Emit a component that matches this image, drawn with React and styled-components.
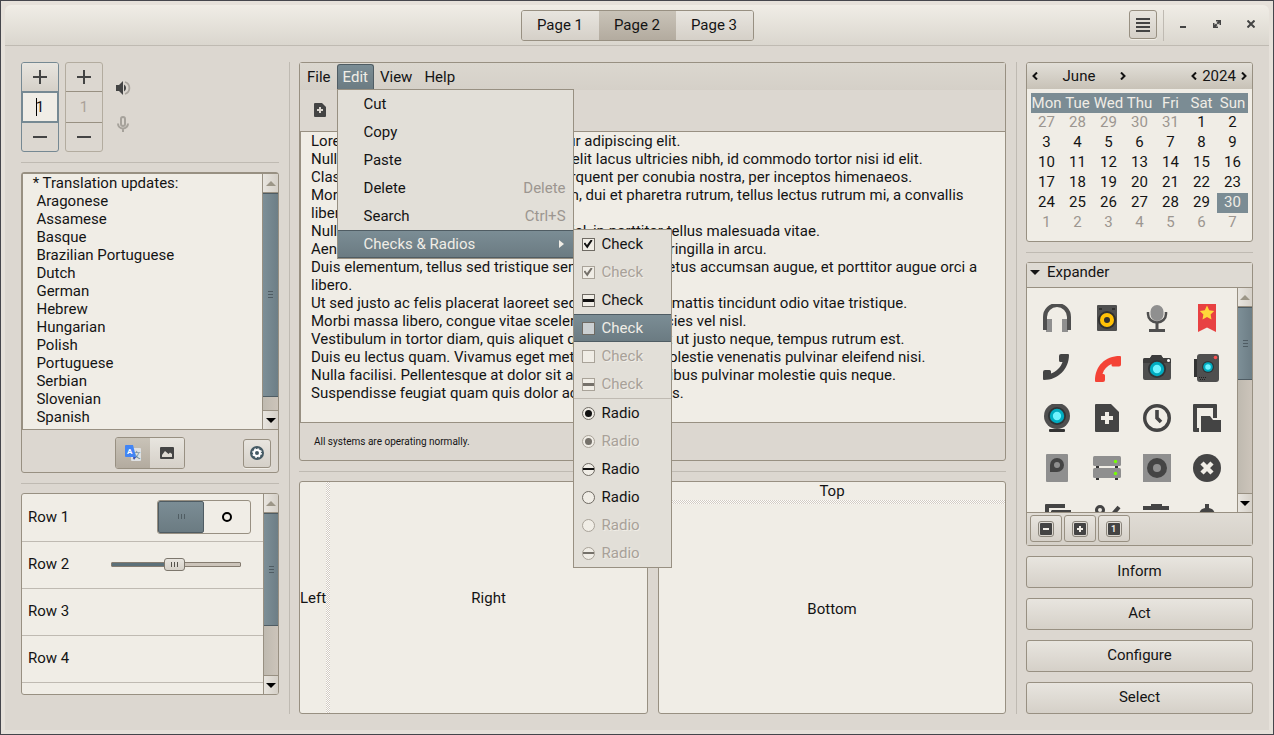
import React from "react";
import styled, { createGlobalStyle, css } from "styled-components";

const c = {
  bg: "#dcd7d0",
  base: "#f0ede6",
  frame: "#e6e1da",
  outline: "#45464c",
  border: "#989082",
  soft: "#bfbab2",
  dim: "#9c9690",
  text: "#141414",
  icon: "#444444",
  menu: "#e2dfd8",
  sel: "linear-gradient(#7b8d95, #6b7b82)",
  flat: "#7b8c94",
  selEdge: "#4f5c63",
  button: "linear-gradient(#e8e5df, #d5d0c8)",
};

const GlobalStyle = createGlobalStyle`
  *, *::before, *::after { box-sizing: border-box; }
  body {
    margin: 0;
    background: ${c.frame};
    color: ${c.text};
    font: 15px/18px Roboto, "Liberation Sans", sans-serif;
  }
  button, input, textarea { font: inherit; color: inherit; margin: 0; }
`;

/* ---------- window ---------- */

const Window = styled.div`
  display: flex;
  flex-direction: column;
  min-height: 100vh;
  padding: 4px;
  border: 1px solid ${c.outline};
  background: ${c.frame};
`;

const Header = styled.header`
  display: grid;
  grid-template-columns: 1fr auto 1fr;
  align-items: start;
  height: 41px;
  padding-top: 5px;
  border-bottom: 1px solid ${c.soft};
  border-radius: 6px 6px 0 0;
  background: linear-gradient(${c.base}, #dad6ce);
`;

const Linked = styled.div`
  display: flex;
  border: 1px solid ${c.border};
  border-radius: 3px;
  overflow: hidden;
`;

const Segment = styled.button`
  display: flex;
  align-items: center;
  justify-content: center;
  width: ${(p) => p.$width};
  height: ${(p) => p.$height};
  padding: 0 0 1px;
  border: 0;
  background: ${(p) => (p.$active ? "linear-gradient(#c9c3b8, #b3ab9f)" : c.button)};
`;

const HeaderEnd = styled.div`
  display: flex;
  justify-content: flex-end;
  align-items: flex-start;
  padding-right: 8px;
`;

const IconButton = styled.button`
  display: flex;
  align-items: center;
  justify-content: center;
  width: 28px;
  height: 29px;
  padding: 0;
  border: 1px solid ${c.border};
  border-radius: 3px;
  background: ${c.button};
  box-shadow: 0 1px 0 ${c.base};
`;

const HeaderRule = styled.div`
  width: 1px;
  height: 31px;
  margin: 0 9px 0 6px;
  background: ${c.soft};
`;

const WindowButton = styled.button`
  display: flex;
  align-items: center;
  justify-content: center;
  width: 20px;
  height: 28px;
  padding: 0;
  border: 0;
  background: none;
  & + & { margin-left: 14px; }
`;

const Body = styled.main`
  display: grid;
  flex: 1;
  grid-template-columns: 269px 1fr 227px;
  column-gap: 9px;
  padding: 16px;
  background: ${c.bg};
`;

const Column = styled.div`
  display: flex;
  flex-direction: column;
  min-width: 0;
  ${(p) => p.$ruled && css`
    padding-right: 10px;
    border-right: 1px solid ${c.soft};
  `}
`;

const Rule = styled.hr`
  flex: none;
  width: 100%;
  height: 1px;
  margin: 10px 0 9px;
  border: 0;
  background: ${c.soft};
`;

const Frame = styled.section`
  display: flex;
  flex-direction: column;
  border: 1px solid ${c.border};
  border-radius: 3px;
`;

/* ---------- scrollbar ---------- */

const Bar = styled.div`
  display: flex;
  flex: none;
  flex-direction: column;
  width: ${(p) => (p.$wide ? "16px" : "15px")};
  border-left: 1px solid ${c.border};
  background: linear-gradient(90deg, #bfbab0, #ccc4ba);
`;

const Stepper = styled.button`
  display: flex;
  align-items: center;
  justify-content: center;
  height: 19px;
  padding: 0;
  border: 0;
  border-bottom: 1px solid ${c.border};
  background: linear-gradient(90deg, #e8e5df, #d5d0c8);
  color: ${(p) => (p.$dim ? "#9c9687" : "#000")};
  &:last-child { border-top: 1px solid ${c.border}; border-bottom: 0; }
`;

const Trough = styled.div`
  display: flex;
  flex: 1;
  flex-direction: column;
`;

const Thumb = styled.div`
  display: flex;
  align-items: center;
  justify-content: center;
  height: ${(p) => p.$size};
  border: solid ${c.selEdge};
  border-width: 1px 0;
  background: linear-gradient(90deg, #7d8f97, #6d7e86);
`;

const Arrow = ({ up }) => (
  <svg width="10" height="5" viewBox="0 0 10 5">
    <path fill="currentColor" d={up ? "M0 5L5 0L10 5Z" : "M0 0H10L5 5Z"} />
  </svg>
);

const Grip = styled.span`
  width: 5px;
  height: 7px;
  background: repeating-linear-gradient(${c.selEdge} 0 1px, transparent 1px 3px);
`;

const Scrollbar = ({ size, wide }) => (
  <Bar $wide={wide}>
    <Stepper $dim aria-label="Scroll up"><Arrow up /></Stepper>
    <Trough><Thumb $size={size}><Grip /></Thumb></Trough>
    <Stepper aria-label="Scroll down"><Arrow /></Stepper>
  </Bar>
);

/* ---------- left column ---------- */

const SpinRow = styled.div`
  display: flex;
  gap: 6px;
`;

const Spin = styled.div`
  display: flex;
  flex-direction: column;
  width: 38px;
  border: 1px solid ${(p) => (p.$focus ? "#768993" : "#b3ac9f")};
  border-radius: 3px;
  overflow: hidden;
`;

const SpinButton = styled.button`
  display: flex;
  align-items: center;
  justify-content: center;
  height: 28px;
  padding: 0;
  border: 0;
  background: ${(p) => (p.$raised ? c.button : "none")};
`;

const SpinField = styled.div`
  position: relative;
  height: 32px;
  border: solid ${(p) => (p.$focus ? "#768993" : c.border)};
  border-width: ${(p) => (p.$focus ? "2px 1px" : "1px 0")};
  background: ${(p) => (p.$focus ? c.base : "none")};
  color: ${(p) => (p.$focus ? c.text : "#aaa199")};
  ${(p) => p.$focus && css`
    &::after {
      content: "";
      position: absolute;
      left: 13px;
      top: 5px;
      width: 1px;
      height: 18px;
      background: #000;
    }
  `}
`;

const SpinInput = styled.input`
  display: block;
  width: 100%;
  height: 100%;
  padding: 0;
  border: 0;
  outline: 0;
  background: none;
  text-align: center;
`;

const SpinIcons = styled.div`
  display: flex;
  flex-direction: column;
  justify-content: space-between;
  padding: 18px 6px 20px;
`;

const TextPane = styled.div`
  display: flex;
  height: ${(p) => p.$height};
  border: solid ${c.border};
  border-width: 1px 0 1px 1px;
  background: ${c.base};
`;

const TextArea = styled.textarea`
  display: block;
  flex: 1;
  min-width: 0;
  padding: ${(p) => p.$pad};
  border: 0;
  outline: 0;
  resize: none;
  overflow: hidden;
  background: none;
  line-height: 18px;
`;

const ActionBar = styled.div`
  display: grid;
  grid-template-columns: 1fr auto 1fr;
  align-items: center;
  height: 42px;
  padding: 4px 7px 0;
  & > :last-child { justify-self: end; }
`;

const Spacer = styled.span``;

const RowsFrame = styled(Frame)`
  flex-direction: row;
  height: 202px;
  overflow: hidden;
  background: ${c.base};
`;

const Rows = styled.ul`
  flex: 1;
  margin: 0;
  padding: 0;
  list-style: none;
  overflow: hidden;
`;

const Row = styled.li`
  display: flex;
  align-items: center;
  justify-content: space-between;
  height: 47px;
  padding: 0 12px 2px 6px;
  &:not(:first-child) { border-top: 1px solid ${c.soft}; }
`;

const Switch = styled.input`
  display: grid;
  grid-template-columns: 1fr 1fr;
  place-items: center;
  appearance: none;
  width: 94px;
  height: 34px;
  border: 1px solid ${c.border};
  border-radius: 3px;
  background: ${c.base};
  &::before {
    content: "";
    width: 100%;
    height: 100%;
    border: 1px solid ${c.selEdge};
    border-radius: 2px;
    background:
      repeating-linear-gradient(90deg, #505d63 0 1px, transparent 1px 3px) center / 7px 5px no-repeat,
      ${c.sel};
  }
  &::after {
    content: "";
    width: 10px;
    height: 10px;
    border: 2px solid #000;
    border-radius: 50%;
  }
`;

const thumbGrip = "repeating-linear-gradient(90deg, #55524c 0 1px, transparent 1px 3px) center / 7px 5px no-repeat";

const Slider = styled.input`
  appearance: none;
  width: 130px;
  height: 14px;
  margin: 0 10px 0 0;
  background: none;
  &::-webkit-slider-runnable-track {
    height: 5px;
    border: 1px solid #857c70;
    border-radius: 1px;
    background: linear-gradient(90deg, #5c7079 50%, #ccc4ba 50%);
  }
  &::-webkit-slider-thumb {
    appearance: none;
    width: 21px;
    height: 13px;
    margin-top: -5px;
    border: 1px solid #7d776d;
    border-radius: 3px;
    background: ${thumbGrip}, ${c.button};
  }
`;

/* ---------- centre column ---------- */

const MenuBar = styled.nav`
  display: flex;
  align-items: flex-start;
  height: 27px;
  padding: 1px 0 0 1px;
  background: linear-gradient(#dbd7cf, #d5d0c8);
`;

const MenuRoot = styled.div`
  position: relative;
`;

const MenuTitle = styled.button`
  display: block;
  height: 25px;
  padding: 0 5px;
  border: 1px solid transparent;
  border-bottom: 0;
  border-radius: 3px 3px 0 0;
  background: none;
  ${(p) => p.$open && css`
    border-color: ${c.selEdge};
    background: ${c.sel};
    color: ${c.base};
  `}
`;

const Popup = styled.div`
  position: absolute;
  z-index: 2;
  left: ${(p) => p.$left};
  top: ${(p) => p.$top};
  width: ${(p) => p.$width};
  border: 1px solid ${c.border};
  background: ${c.menu};
`;

const selected = css`
  border: solid ${c.selEdge};
  border-width: 1px 0;
  background: ${c.sel};
  color: ${c.base};
`;

const MenuItem = styled.button`
  display: flex;
  align-items: center;
  justify-content: space-between;
  width: 100%;
  height: 28px;
  padding: 0 7px 0 26px;
  border: 0;
  background: none;
  ${(p) => p.$selected && selected}
`;

const Accel = styled.span`
  color: ${c.dim};
`;

const Option = styled.label`
  display: flex;
  align-items: center;
  gap: 7px;
  height: 28px;
  padding-left: 8px;
  ${(p) => p.$disabled && css`color: #a8a199; text-shadow: 1px 1px 0 ${c.base};`}
  ${(p) => p.$selected && selected}
`;

const Mark = styled.input`
  display: grid;
  place-items: center;
  flex: none;
  appearance: none;
  width: 13px;
  height: 13px;
  border: 1px solid ${(p) => (p.disabled ? "#a9a399" : "#6f6b64")};
  border-radius: ${(p) => (p.type === "radio" ? "50%" : "0")};
  background: ${(p) => (p.$selected ? "#cbd0d2" : c.base)};
  color: ${(p) => (p.disabled ? "#75716a" : "#111")};
  &::before {
    content: "";
    ${(p) => p.$mixed && css`width: 11px; height: ${p.type === "radio" ? "2px" : "3px"}; background: currentColor;`}
    ${(p) => !p.$mixed && p.type === "radio" && p.checked && css`
      width: 7px; height: 7px; border-radius: 50%; background: currentColor;
    `}
    ${(p) => !p.$mixed && p.type === "checkbox" && p.checked && css`
      width: 9px; height: 9px; background: currentColor;
      clip-path: polygon(0 45%, 18% 32%, 38% 60%, 82% 0, 100% 12%, 42% 100%);
    `}
  }
`;

const MenuRule = styled.div`
  height: 1px;
  background: ${c.soft};
`;

const ToolBar = styled.div`
  display: flex;
  align-items: center;
  height: 41px;
  padding: 0 0 2px 14px;
`;

const PlainButton = styled.button`
  display: flex;
  padding: 0;
  border: 0;
  background: none;
`;

const Status = styled.footer`
  height: 37px;
  padding-left: 14px;
  font-size: 10px;
  line-height: 37px;
`;

const Panes = styled.div`
  display: grid;
  flex: 1;
  grid-template-columns: 349fr 348fr;
  gap: 10px;
`;

const Pane = styled(Frame)`
  flex-direction: ${(p) => p.$dir};
  background: ${c.base};
`;

const PaneCell = styled.div`
  display: flex;
  flex: ${(p) => (p.$grow ? 1 : "none")};
  align-items: center;
  justify-content: center;
`;

const PaneHandle = styled.div`
  flex: none;
  flex-basis: 4px;
  background: repeating-conic-gradient(#d3ccc4 0 25%, #fdfcfa 0 50%) 0 0 / 2px 2px;
`;

/* ---------- right column ---------- */

const CalHeader = styled.div`
  display: flex;
  align-items: center;
  justify-content: space-between;
  height: 26px;
  padding: 0 5px;
  background: linear-gradient(#e2dfd8, #c8c2b7);
`;

const CalGroup = styled.div`
  display: flex;
  align-items: center;
  justify-content: space-between;
  width: ${(p) => p.$width};
`;

const CalFrame = styled(Frame)`
  height: 180px;
  overflow: hidden;
  background: ${c.base};
`;

const CalTable = styled.table`
  width: calc(100% - 8px);
  margin: 4px;
  border-collapse: collapse;
  table-layout: fixed;
  text-align: center;
  tr { height: 20px; }
  th, td { padding: 0; font-weight: 400; line-height: 18px; white-space: nowrap; }
  td { vertical-align: top; }
  thead { background: ${c.flat}; color: ${c.base}; }
`;

const Day = styled.td`
  color: ${(p) => (p.$other ? c.dim : "inherit")};
  ${(p) => p.$today && css`background: ${c.flat}; color: ${c.base};`}
`;

const Expander = styled.button`
  display: flex;
  align-items: center;
  gap: 7px;
  height: 25px;
  padding: 0 3px 6px;
  border: 0;
  border-bottom: 1px solid ${c.border};
  background: #dedad3;
  text-align: left;
`;

const IconView = styled.div`
  display: flex;
  height: 224px;
  background: ${c.base};
  overflow: hidden;
`;

const IconGrid = styled.div`
  display: grid;
  flex: 1;
  grid-template-columns: repeat(4, 50px);
  grid-auto-rows: 50px;
  place-items: center;
  padding: 5px;
`;

const IconBar = styled.div`
  display: flex;
  gap: 2px;
  height: 33px;
  padding: 2px 3px 0;
  border-top: 1px solid ${c.border};
  background: linear-gradient(#e0dcd5, #d5d0c8);
`;

const ToolButton = styled.button`
  display: flex;
  align-items: center;
  justify-content: center;
  width: 32px;
  height: 27px;
  padding: 0;
  border: 1px solid ${c.border};
  border-radius: 3px;
  background: ${c.button};
`;

const ToolGlyph = styled.span`
  display: flex;
  padding: 1px;
  border: 1px solid #8a857b;
  border-radius: 3px;
  svg { display: block; }
`;

const Actions = styled.div`
  display: flex;
  flex-direction: column;
  gap: 10px;
  margin-top: 10px;
`;

const Action = styled.button`
  height: 32px;
  padding: 0 8px 2px;
  border: 1px solid ${c.border};
  border-radius: 3px;
  background: ${c.button};
`;

/* ---------- drawings ---------- */

const Stroke = ({ d, size = 14, width = 2, color = c.icon }) => (
  <svg width={size} height={size} viewBox={`0 0 ${size} ${size}`} fill="none" stroke={color} strokeWidth={width}>
    <path d={d} />
  </svg>
);

const Chevron = ({ left }) => (
  <svg width="6" height="8" viewBox="0 0 6 8" fill="none" stroke="#111" strokeWidth="2">
    <path d={left ? "M5 0.5L1.5 4L5 7.5" : "M1 0.5L4.5 4L1 7.5"} />
  </svg>
);

const D = "#4f4f4f";
const G = "#8f8f8f";
const K = "#444444";

const Lens = ({ x, y, r }) => (
  <>
    <circle cx={x} cy={y} r={r} fill="#2f3436" />
    <circle cx={x} cy={y} r={r * 0.8} fill="#00acc1" />
    <circle cx={x} cy={y} r={r * 0.46} fill="#6ff3ff" />
  </>
);

const glyphs = [
  <>
    <path d="M3 15h6v14H3zM19 15h6v14h-6z" fill={G} />
    <path d="M2 26V13a12 12 0 0 1 24 0v13" fill="none" stroke={D} strokeWidth="4" />
  </>,
  <>
    <rect x="4" y="1" width="20" height="26" rx="1" fill={D} />
    <circle cx="14" cy="16" r="9" fill="#303030" />
    <circle cx="14" cy="16" r="5" fill="none" stroke="#ffc107" strokeWidth="4" />
    <path d="M6 4h3v2H6zM19 4h3v2h-3z" fill="#303030" />
  </>,
  <>
    <rect x="7.500" y="1" width="13" height="16" rx="6.500" fill={G} />
    <path d="M5 8v2a9 8.500 0 0 0 18 0V8" fill="none" stroke={D} strokeWidth="2.500" />
    <path d="M12.500 18h3v7H22v3H6v-3h6.500z" fill={D} />
  </>,
  <>
    <path d="M5 0h18v28l-9-4.500L5 28z" fill="#e84142" />
    <path d="M14 1.500l2.200 4.700 5 .7-3.600 3.600.9 5.100-4.500-2.500-4.500 2.500.9-5.100L6.800 6.900l5-.7z" fill="#ffd83a" />
  </>,
  <path d="M18 0h7q1 0 1 1C26 15 15 26 1 26q-1 0-1-1v-7q0-2 2-2h4.500Q8 16 8 17.500V19.500C13 18 18 13 19.500 8h-2Q16 8 16 6.500V2q0-2 2-2z" fill={K} />,
  <path d="M27 2C12 2 2 12 2 27q0 1 1 1h7q2 0 2-2v-4.500Q12 20 10.500 20H9.500C11 15 14 12 18.500 10v1q0 1.500 1.500 1.500h6q2 0 2-2V3q0-1-1-1z" fill="#f44336" />,
  <>
    <path d="M2 4h5l2-3h9l2 3h6q2 0 2 2v18q0 2-2 2H2q-2 0-2-2V6q0-2 2-2z" fill={D} />
    <path d="M2 4h5l2-3h9l2 3h6q2 0 2 2v3H0V6q0-2 2-2z" fill="#3c3c3c" />
    <Lens x={14} y={15} r={9} />
    <circle cx="25.500" cy="6.500" r="1.500" fill="#fff" />
  </>,
  <>
    <path d="M1 5h4v18H1z" fill="#333" />
    <rect x="4" width="22" height="28" rx="3" fill={D} />
    <Lens x={15} y={13} r={6} />
    <circle cx="22.500" cy="3.500" r="1.800" fill="#ff5252" />
    <path d="M6 23.500h7M7 25.500h5" stroke="#222" strokeDasharray="1 1" />
  </>,
  <>
    <rect x="6" y="25" width="16" height="3" rx="1" fill="#333" />
    <circle cx="14" cy="12" r="13" fill={D} />
    <Lens x={14} y={12} r={9} />
  </>,
  <path fillRule="evenodd" d="M3 0h15l8 8v19q0 1-1 1H3q-1 0-1-1V1q0-1 1-1zM12 8v4H8v4h4v4h4v-4h4v-4h-4V8z" fill={K} />,
  <g fill="none" stroke={K}>
    <circle cx="14" cy="14" r="12.300" strokeWidth="3.400" />
    <path d="M14 6v8l4 4" strokeWidth="3.600" />
  </g>,
  <>
    <path d="M0 1q0-1 1-1h22q1 0 1 1v13h-4V4H4v20h2v4H1q-1 0-1-1z" fill={K} />
    <path d="M8 12h9l3 4h8v12H8z" fill={K} />
  </>,
  <>
    <rect x="3" width="22" height="28" rx="1" fill={G} />
    <path d="M14 4a7 7 0 0 1 0 14H7v-7a7 7 0 0 1 7-7z" fill={K} />
    <circle cx="14" cy="11" r="3" fill={G} />
  </>,
  <>
    <path d="M3 12h3v2H3zM22 12h3v2h-3zM3 24h3v2H3zM22 24h3v2h-3z" fill="#333" />
    <rect y="2" width="28" height="10" rx="1.500" fill={G} />
    <rect y="14" width="28" height="10" rx="1.500" fill={G} />
    <circle cx="22.500" cy="7.500" r="1.700" fill="#76ff03" />
    <circle cx="22.500" cy="19.500" r="1.700" fill="#76ff03" />
  </>,
  <>
    <rect width="28" height="28" fill={G} />
    <circle cx="14" cy="14" r="10" fill={K} />
    <circle cx="14" cy="14" r="4" fill={G} />
  </>,
  <>
    <circle cx="14" cy="14" r="14" fill={K} />
    <path d="M9 9l10 10M19 9L9 19" stroke={c.base} strokeWidth="4.500" />
  </>,
  <>
    <path d="M3 0h19v4H6v20H2V1q0-1 1-1z" fill={K} />
    <path d="M9 6h19v22H8V7z" fill={K} />
  </>,
  <>
    <circle cx="7" cy="6" r="3.500" fill="none" stroke={K} strokeWidth="3" />
    <path d="M10 9l12 16M26 3L14 17" stroke={K} strokeWidth="4" />
  </>,
  <path d="M8 0h11v2h7v4H0V2h8zM0 8h26v20H0z" fill={K} />,
  <path d="M12 0h4v4q6 1 6 8v14H6V12q0-7 6-8z" fill={K} />,
];

const DocNew = () => (
  <svg width="12" height="14" viewBox="0 0 12 14">
    <path fillRule="evenodd" d="M1 0h7l4 4v9q0 1-1 1H1q-1 0-1-1V1q0-1 1-1zM5 4v2H3v2h2v2h2V8h2V6H7V4z" fill={K} />
  </svg>
);

const SpeakerIcon = () => (
  <svg width="16" height="16" viewBox="0 0 16 16">
    <path d="M1 5h3l4-4v14l-4-4H1z" fill={K} />
    <path d="M9 4.500a4 4 0 0 1 0 7z" fill={K} />
    <path d="M10 2a6.300 6.300 0 0 1 0 12" fill="none" stroke="#aaa59e" strokeWidth="1.800" />
  </svg>
);

const MicIcon = () => (
  <svg width="16" height="16" viewBox="0 0 16 16" fill="none" stroke="#a6a29b" strokeWidth="2">
    <rect x="6" y="1" width="4" height="9" rx="2" />
    <path d="M3 7.500a5 5 0 0 0 10 0M8 13v3" />
  </svg>
);

const TranslateIcon = () => (
  <svg width="16" height="16" viewBox="0 0 16 16">
    <rect x="6" y="3" width="10" height="13" rx="1" fill="#dfe1e3" />
    <text x="7.500" y="13" fontSize="8" fontFamily="Noto Sans CJK SC, sans-serif" fill="#607d8b">文</text>
    <path d="M8 12h3l-2 3z" fill="#3f51b5" />
    <path d="M1 0h7l3 12H1q-1 0-1-1V1q0-1 1-1z" fill="#4285f4" />
    <text x="2" y="9" fontSize="8" fontWeight="700" fill="#fff">A</text>
  </svg>
);

const PictureIcon = () => (
  <svg width="14" height="12" viewBox="0 0 14 12">
    <path fillRule="evenodd" d="M1 0h12q1 0 1 1v10q0 1-1 1H1q-1 0-1-1V1q0-1 1-1zM2 10h10V7L10 5.500 8.500 7 5 4 2 8z" fill={K} />
  </svg>
);

const GearIcon = () => (
  <svg width="14" height="14" viewBox="0 0 14 14">
    <circle cx="7" cy="7" r="7" fill="#455a64" />
    <circle cx="7" cy="7" r="3" fill="none" stroke="#fff" strokeWidth="2" />
    <circle cx="7" cy="7" r="4.300" fill="none" stroke="#fff" strokeWidth="1.200" strokeDasharray="1.700 1.680" />
  </svg>
);

const ToolIcon = ({ children }) => (
  <svg width="12" height="12" viewBox="0 0 12 12">
    <rect width="12" height="12" rx="1" fill={K} />
    {children}
  </svg>
);

/* ---------- data ---------- */

const languages = [
  " * Translation updates:", "  Aragonese", "  Assamese", "  Basque", "  Brazilian Portuguese", "  Dutch",
  "  German", "  Hebrew", "  Hungarian", "  Polish", "  Portuguese", "  Serbian", "  Slovenian", "  Spanish",
].join("\n");

const lorem = [
  "Lorem ipsum dolor sit amet, consectetur adipiscing elit.",
  "Nulla convallis, eros at vestibulum nec, elit lacus ultricies nibh, id commodo tortor nisi id elit.",
  "Class aptent taciti sociosqu ad litora torquent per conubia nostra, per inceptos himenaeos.",
  "Morbi vel felis erat. Maecenas dignissim, dui et pharetra rutrum, tellus lectus rutrum mi, a convallis libero nisi quis tellus.",
  "Nulla facilisi. Nullam eleifend lobortis nisl, in porttitor tellus malesuada vitae.",
  "Aenean lacus tellus, pellentesque quis molestie quis, fringilla in arcu.",
  "Duis elementum, tellus sed tristique semper, metus metus accumsan augue, et porttitor augue orci a libero.",
  "Ut sed justo ac felis placerat laoreet sed id sem. Proin mattis tincidunt odio vitae tristique.",
  "Morbi massa libero, congue vitae scelerisque vel, ultricies vel nisl.",
  "Vestibulum in tortor diam, quis aliquet quam. Praesent ut justo neque, tempus rutrum est.",
  "Duis eu lectus quam. Vivamus eget metus a mauris molestie venenatis pulvinar eleifend nisi.",
  "Nulla facilisi. Pellentesque at dolor sit amet purus dapibus pulvinar molestie quis neque.",
  "Suspendisse feugiat quam quis dolor accumsan cursus.",
].join("\n");

const editItems = [["Cut"], ["Copy"], ["Paste"], ["Delete", "Delete"], ["Search", "Ctrl+S"]];

const states = [
  { checked: true },
  { checked: true, disabled: true },
  { mixed: true },
  {},
  { disabled: true },
  { mixed: true, disabled: true },
];

const weekdays = ["Mon", "Tue", "Wed", "Thu", "Fri", "Sat", "Sun"];
const days = Array.from({ length: 42 }, (_, i) => (i < 5 ? 27 + i : i < 35 ? i - 4 : i - 34));

const Options = ({ type, text, current }) =>
  states.map((s, i) => (
    <Option key={i} $disabled={s.disabled} $selected={i === current}>
      <Mark
        type={type}
        name={`${type}-${i}`}
        checked={!!s.checked}
        disabled={!!s.disabled}
        readOnly
        $mixed={s.mixed}
        $selected={i === current}
      />
      {text}
    </Option>
  ));

const Spinner = ({ focus, label }) => (
  <Spin $focus={focus}>
    <SpinButton $raised={focus} aria-label={`Increase ${label}`}><Stroke d="M7 0V14M0 7H14" /></SpinButton>
    <SpinField $focus={focus}>
      <SpinInput defaultValue="1" aria-label={label} disabled={!focus} />
    </SpinField>
    <SpinButton aria-label={`Decrease ${label}`}><Stroke d="M0 7H14" /></SpinButton>
  </Spin>
);

export default function App() {
  return (
    <Window>
      <GlobalStyle />
      <Header>
        <Spacer />
        <Linked>
          <Segment $width="77px" $height="29px">Page 1</Segment>
          <Segment $width="77px" $height="29px" $active>Page 2</Segment>
          <Segment $width="77px" $height="29px">Page 3</Segment>
        </Linked>
        <HeaderEnd>
          <IconButton aria-label="Menu"><Stroke d="M0 1H14M0 5H14M0 9H14M0 13H14" /></IconButton>
          <HeaderRule />
          <WindowButton aria-label="Minimize"><Stroke size={8} d="M1 7H7" /></WindowButton>
          <WindowButton aria-label="Restore">
            <svg width="8" height="8" viewBox="0 0 8 8" fill={K}>
              <path d="M3 0h5v5H6.500V3L5 4.500 3.500 3 5 1.500H3zM0 3h1.500v2L3 3.500 4.500 5 3 6.500H5V8H0z" />
            </svg>
          </WindowButton>
          <WindowButton aria-label="Close"><Stroke size={8} d="M0.500 0.500L7.500 7.500M7.500 0.500L0.500 7.500" /></WindowButton>
        </HeaderEnd>
      </Header>

      <Body>
        <Column $ruled>
          <SpinRow>
            <Spinner focus label="first value" />
            <Spinner label="second value" />
            <SpinIcons>
              <SpeakerIcon />
              <MicIcon />
            </SpinIcons>
          </SpinRow>
          <Rule />
          <Frame>
            <TextPane $height="257px">
              <TextArea $pad="0 0 0 6px" defaultValue={languages} aria-label="Translation updates" />
              <Scrollbar size="94%" wide />
            </TextPane>
            <ActionBar>
              <Spacer />
              <Linked>
                <Segment $width="34px" $height="30px" $active aria-label="Translate"><TranslateIcon /></Segment>
                <Segment $width="34px" $height="30px" aria-label="Picture"><PictureIcon /></Segment>
              </Linked>
              <IconButton aria-label="Settings"><GearIcon /></IconButton>
            </ActionBar>
          </Frame>
          <Rule />
          <RowsFrame>
            <Rows>
              <Row>
                <label htmlFor="row-switch">Row 1</label>
                <Switch id="row-switch" type="checkbox" role="switch" />
              </Row>
              <Row>
                <label htmlFor="row-slider">Row 2</label>
                <Slider id="row-slider" type="range" defaultValue="49" />
              </Row>
              <Row>Row 3</Row>
              <Row>Row 4</Row>
              <Row />
            </Rows>
            <Scrollbar size="70%" />
          </RowsFrame>
        </Column>

        <Column $ruled>
          <Frame>
            <MenuBar>
              <MenuTitle>File</MenuTitle>
              <MenuRoot>
                <MenuTitle $open>Edit</MenuTitle>
                <Popup $left="0" $top="100%" $width="237px" role="menu">
                  {editItems.map(([name, key]) => (
                    <MenuItem key={name} role="menuitem">
                      {name}
                      {key && <Accel>{key}</Accel>}
                    </MenuItem>
                  ))}
                  <MenuItem role="menuitem" $selected>
                    Checks &amp; Radios
                    <svg width="8" height="8" viewBox="0 0 8 8" fill={c.base}><path d="M1 0L6 4L1 8Z" /></svg>
                  </MenuItem>
                  <Popup $left="235px" $top="139px" $width="99px" role="menu">
                    <Options type="checkbox" text="Check" current={3} />
                    <MenuRule />
                    <Options type="radio" text="Radio" />
                  </Popup>
                </Popup>
              </MenuRoot>
              <MenuTitle>View</MenuTitle>
              <MenuTitle>Help</MenuTitle>
            </MenuBar>
            <ToolBar>
              <PlainButton aria-label="New document"><DocNew /></PlainButton>
            </ToolBar>
            <TextPane $height="292px">
              <TextArea $pad="0 8px 0 10px" defaultValue={lorem} aria-label="Document" />
            </TextPane>
            <Status>All systems are operating normally.</Status>
          </Frame>
          <Rule />
          <Panes>
            <Pane $dir="row">
              <PaneCell>Left</PaneCell>
              <PaneHandle />
              <PaneCell $grow>Right</PaneCell>
            </Pane>
            <Pane $dir="column">
              <PaneCell>Top</PaneCell>
              <PaneHandle />
              <PaneCell $grow>Bottom</PaneCell>
            </Pane>
          </Panes>
        </Column>

        <Column>
          <CalFrame>
            <CalHeader>
              <CalGroup $width="94px">
                <PlainButton aria-label="Previous month"><Chevron left /></PlainButton>
                June
                <PlainButton aria-label="Next month"><Chevron /></PlainButton>
              </CalGroup>
              <CalGroup $width="56px">
                <PlainButton aria-label="Previous year"><Chevron left /></PlainButton>
                2024
                <PlainButton aria-label="Next year"><Chevron /></PlainButton>
              </CalGroup>
            </CalHeader>
            <CalTable>
              <thead>
                <tr>{weekdays.map((d) => <th key={d} scope="col">{d}</th>)}</tr>
              </thead>
              <tbody>
                {[0, 1, 2, 3, 4, 5].map((w) => (
                  <tr key={w}>
                    {days.slice(w * 7, w * 7 + 7).map((d, i) => (
                      <Day key={i} $other={w * 7 + i < 5 || w === 5} $today={w * 7 + i === 34}>{d}</Day>
                    ))}
                  </tr>
                ))}
              </tbody>
            </CalTable>
          </CalFrame>
          <Rule />
          <Frame>
            <Expander aria-expanded="true"><Arrow />Expander</Expander>
            <IconView>
              <IconGrid>
                {glyphs.map((g, i) => (
                  <svg key={i} width="28" height="28" viewBox="0 0 28 28">{g}</svg>
                ))}
              </IconGrid>
              <Scrollbar size="39%" />
            </IconView>
            <IconBar>
              <ToolButton aria-label="Remove"><ToolGlyph><ToolIcon><path d="M3 5h6v2H3z" fill={c.base} /></ToolIcon></ToolGlyph></ToolButton>
              <ToolButton aria-label="Add"><ToolGlyph><ToolIcon><path d="M5 3h2v2h2v2H7v2H5V7H3V5h2z" fill={c.base} /></ToolIcon></ToolGlyph></ToolButton>
              <ToolButton aria-label="Single"><ToolGlyph><ToolIcon><text x="3" y="9" fontSize="9" fontWeight="700" fill={c.base}>1</text></ToolIcon></ToolGlyph></ToolButton>
            </IconBar>
          </Frame>
          <Actions>
            <Action>Inform</Action>
            <Action>Act</Action>
            <Action>Configure</Action>
            <Action>Select</Action>
          </Actions>
        </Column>
      </Body>
    </Window>
  );
}
